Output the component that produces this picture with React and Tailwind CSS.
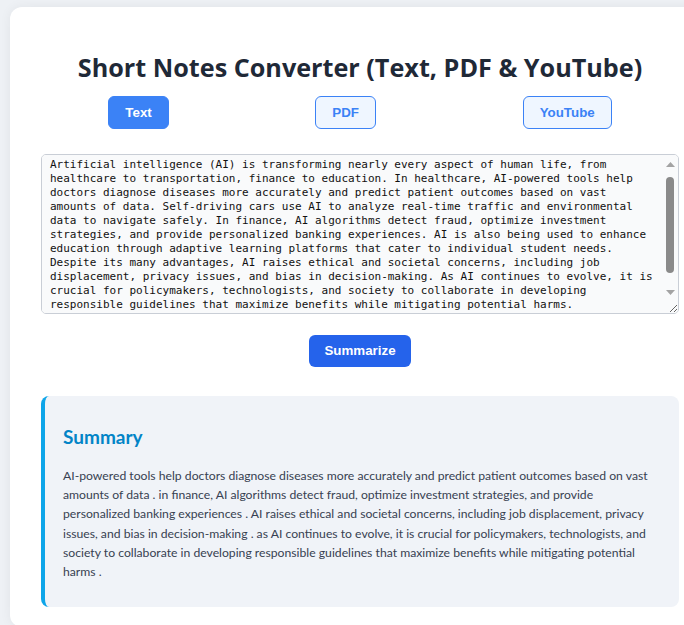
import { useEffect, useRef, useState } from 'react';

const SOURCE_TEXT =
  'Artificial intelligence (AI) is transforming nearly every aspect of human life, from healthcare to transportation, finance to education. In healthcare, AI-powered tools help doctors diagnose diseases more accurately and predict patient outcomes based on vast amounts of data. Self-driving cars use AI to analyze real-time traffic and environmental data to navigate safely. In finance, AI algorithms detect fraud, optimize investment strategies, and provide personalized banking experiences. AI is also being used to enhance education through adaptive learning platforms that cater to individual student needs. Despite its many advantages, AI raises ethical and societal concerns, including job displacement, privacy issues, and bias in decision-making. As AI continues to evolve, it is crucial for policymakers, technologists, and society to collaborate in developing responsible guidelines that maximize benefits while mitigating potential harms.\n\n\n';

const SUMMARY =
  'AI-powered tools help doctors diagnose diseases more accurately and predict patient outcomes based on vast amounts of data . in finance, AI algorithms detect fraud, optimize investment strategies, and provide personalized banking experiences . AI raises ethical and societal concerns, including job displacement, privacy issues, and bias in decision-making . as AI continues to evolve, it is crucial for policymakers, technologists, and society to collaborate in developing responsible guidelines that maximize benefits while mitigating potential harms .';

const tabs = ['Text', 'PDF', 'YouTube'];

// drawn scrollbar, the headless browser hides native ones
function FakeScrollbar() {
  return (
    <div className="pointer-events-none absolute right-[1px] top-[1px] h-[140px] w-[15px]">
      <svg className="absolute left-[3px] top-[7px]" width="9" height="5" viewBox="0 0 9 5">
        <path d="M4.5 0L9 5H0z" fill="#a3a3a3" />
      </svg>
      <div className="absolute left-[3px] top-[22px] h-[96px] w-[8px] rounded-full bg-[#8a8a8a]" />
      <svg className="absolute left-[3px] top-[135px]" width="9" height="5" viewBox="0 0 9 5">
        <path d="M0 0H9L4.5 5z" fill="#a3a3a3" />
      </svg>
    </div>
  );
}

export default function App() {
  const [mode, setMode] = useState('Text');
  const [text, setText] = useState(SOURCE_TEXT);
  const areaRef = useRef(null);

  useEffect(() => {
    // the reference shows the box scrolled a few px down
    if (areaRef.current) areaRef.current.scrollTop = 5;
  }, []);

  return (
    <div className="min-h-screen overflow-hidden bg-[#eef1f5] pl-[10px] pt-[7px] font-['Open_Sans',sans-serif]">
      <div className="w-[700px] rounded-xl bg-white px-[31px] pb-[20px] pt-[43px] shadow-[0_0_12px_rgba(0,0,0,0.06)]">
        {/* Title */}
        <h1 className="text-center text-[25.2px] font-bold leading-[34px] text-[#1f2937]">
          Short Notes Converter (Text, PDF &amp; YouTube)
        </h1>

        {/* Source tabs */}
        <div className="-mx-[6px] mt-[12px] flex justify-around">
          {tabs.map((t) => (
            <button
              key={t}
              onClick={() => setMode(t)}
              className={
                mode === t
                  ? "rounded-md border border-[#3b82f6] bg-[#3b82f6] px-4 py-2 font-['Liberation_Sans',sans-serif] text-[13.33px] font-bold leading-[15px] text-white"
                  : "rounded-md border border-[#3b82f6] bg-[#eff6ff] px-4 py-2 font-['Liberation_Sans',sans-serif] text-[13.33px] font-bold leading-[15px] text-[#3b82f6]"
              }
            >
              {t}
            </button>
          ))}
        </div>

        {/* Input */}
        <div className="relative mt-[25px]">
          <textarea
            ref={areaRef}
            value={text}
            onChange={(e) => setText(e.target.value)}
            className="block h-[160px] w-full resize-y rounded-[5px] border border-[#c9ced6] bg-[#f9fafb] py-2 pl-2 pr-[23px] font-['DejaVu_Sans_Mono',monospace] text-[11px] leading-[14px] text-[#111] outline-none"
          />
          <FakeScrollbar />
        </div>

        <div className="mt-[21px] flex justify-center">
          <button className="rounded-md bg-[#2563eb] px-[15px] py-2 font-['Liberation_Sans',sans-serif] text-[13.33px] font-bold leading-[16px] text-white">
            Summarize
          </button>
        </div>

        {/* Result */}
        <div className="mt-[29px] rounded-lg border-l-4 border-[#0ea5e9] bg-[#f0f3f8] pb-[26px] pl-[18px] pr-[22px] pt-[28px] font-['Lato',sans-serif]">
          <h3 className="text-[19px] font-bold leading-[26px] text-[#0284c7]">Summary</h3>
          <p className="mt-[16px] text-[12.2px] leading-[19.2px] text-[#374151]">{SUMMARY}</p>
        </div>
      </div>
    </div>
  );
}
